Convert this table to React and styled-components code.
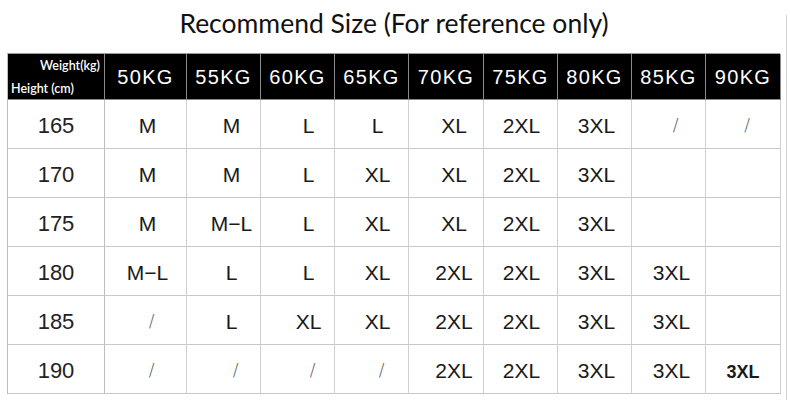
import React from 'react'
import styled, { createGlobalStyle } from 'styled-components'

const Global = createGlobalStyle`
  body {
    margin: 0;
    background: #fff;
  }
`

const Page = styled.div`
  width: 790px;
  height: 410px;
  display: flex;
  flex-direction: row;
  overflow: hidden;
  background: #fff;
`

const Content = styled.div`
  width: 786px;
  display: flex;
  flex-direction: column;
`

const EdgeLine = styled.div`
  width: 1px;
  height: 385px;
  margin-top: 15px;
  background: #d4d4d4;
`

const Title = styled.h1`
  margin: 0;
  height: 53px;
  padding-top: 8px;
  box-sizing: border-box;
  font-family: 'Lato', 'Open Sans', sans-serif;
  font-weight: 400;
  font-size: 26.5px;
  line-height: 30px;
  color: #111;
  text-align: center;
  padding-left: 2px;
`

const Table = styled.div`
  margin-left: 7px;
  display: grid;
  grid-template-columns: 97px 82px 74px 74px 74px 75px 74px 74px 74px 75px;
  grid-template-rows: 46px repeat(6, 49px);
  border-left: 1px solid #bdbdbd;
  border-top: 1px solid #9a9a9a;
  width: 773px;
  box-sizing: border-box;
`

const Corner = styled.div`
  background: #000;
  border-right: 1px solid #8a8a8a;
  border-bottom: 1px solid #8a8a8a;
  display: flex;
  flex-direction: column;
  justify-content: space-between;
  padding: 4px 4px 3px 3px;
  box-sizing: border-box;
  font-family: 'Lato', 'Open Sans', sans-serif;
  font-weight: 600;
  font-size: 12.5px;
  color: #fff;
`

const CornerLabel = styled.span`
  text-align: ${p => (p.$right ? 'right' : 'left')};
`

const HeadCell = styled.div`
  background: #000;
  border-right: 1px solid #8a8a8a;
  border-bottom: 1px solid #8a8a8a;
  display: flex;
  align-items: center;
  justify-content: center;
  font-family: 'Liberation Sans', Arial, sans-serif;
  font-size: 20px;
  letter-spacing: 1.3px;
  color: #fff;
  padding-top: 1px;
`

const RowHead = styled.div`
  border-right: 1px solid #bdbdbd;
  border-bottom: 1px solid #c8c8c8;
  display: flex;
  align-items: center;
  justify-content: center;
  font-family: 'Liberation Sans', Arial, sans-serif;
  font-size: 22px;
  color: #222;
  padding-top: 3px;
  box-sizing: border-box;
`

const Cell = styled.div`
  border-right: 1px solid #d0d0d0;
  border-bottom: 1px solid #c8c8c8;
  display: flex;
  align-items: center;
  justify-content: center;
  box-sizing: border-box;
  padding-top: ${p => (p.$bold ? 6 : 3)}px;
  padding-left: ${p => p.$shift * 2}px;
  font-family: 'Liberation Sans', Arial, sans-serif;
  font-size: ${p => (p.$bold ? 18 : 21)}px;
  font-weight: ${p => (p.$bold ? 700 : 400)};
  color: #1a1a1a;
`

const Slash = styled.span`
  font-family: 'DejaVu Sans', sans-serif;
  font-weight: 200;
  font-size: 17px;
  color: #5a5a5a;
  margin-left: 8px;
  margin-top: -2px;
`

const weights = ['50KG', '55KG', '60KG', '65KG', '70KG', '75KG', '80KG', '85KG', '90KG']
const shifts = [2, 8, 11, 6, 8, 1, 2, 3, 0]

const rows = [
  ['165', ['M', 'M', 'L', 'L', 'XL', '2XL', '3XL', '/', '/']],
  ['170', ['M', 'M', 'L', 'XL', 'XL', '2XL', '3XL', '', '']],
  ['175', ['M', 'M\u2212L', 'L', 'XL', 'XL', '2XL', '3XL', '', '']],
  ['180', ['M\u2212L', 'L', 'L', 'XL', '2XL', '2XL', '3XL', '3XL', '']],
  ['185', ['/', 'L', 'XL', 'XL', '2XL', '2XL', '3XL', '3XL', '']],
  ['190', ['/', '/', '/', '/', '2XL', '2XL', '3XL', '3XL', '3XL!']],
]

export default function App() {
  return (
    <Page>
      <Global />
      <Content>
        <Title>Recommend Size (For reference only)</Title>
        <Table>
          <Corner>
            <CornerLabel $right>Weight(kg)</CornerLabel>
            <CornerLabel>Height (cm)</CornerLabel>
          </Corner>
          {weights.map(w => (
            <HeadCell key={w}>{w}</HeadCell>
          ))}
          {rows.map(([h, sizes]) => (
            <React.Fragment key={h}>
              <RowHead>{h}</RowHead>
              {sizes.map((s, i) => {
                const bold = s.endsWith('!')
                return (
                  <Cell key={i} $shift={shifts[i]} $bold={bold}>
                    {s === '/' ? <Slash>/</Slash> : bold ? s.slice(0, -1) : s}
                  </Cell>
                )
              })}
            </React.Fragment>
          ))}
        </Table>
      </Content>
      <EdgeLine />
    </Page>
  )
}
